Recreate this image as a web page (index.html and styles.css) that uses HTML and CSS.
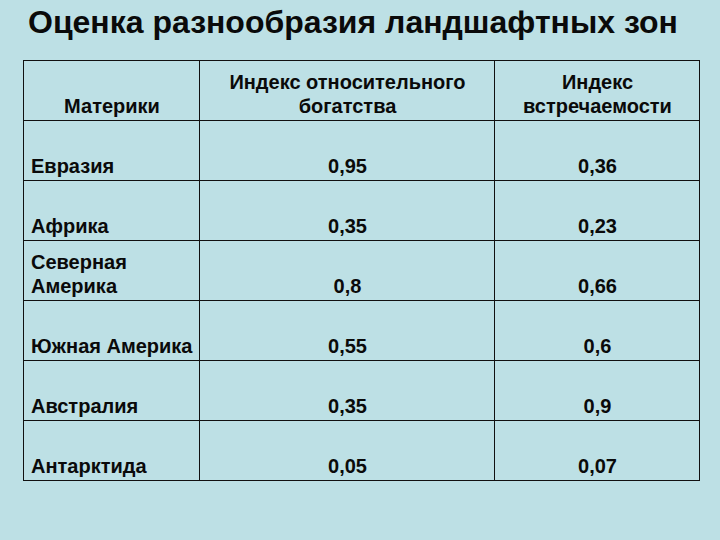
FILE: index.html
```html
<!DOCTYPE html>
<html lang="ru">
<head>
<meta charset="utf-8">
<link rel="stylesheet" href="styles.css">
</head>
<body>
<div class="slide">
  <h1 class="title">Оценка разнообразия ландшафтных зон</h1>
  <table class="grid">
    <colgroup>
      <col class="c1"><col class="c2"><col class="c3">
    </colgroup>
    <thead>
      <tr>
        <th class="name">Материки</th>
        <th>Индекс относительного<br>богатства</th>
        <th>Индекс<br>встречаемости</th>
      </tr>
    </thead>
    <tbody>
      <tr><td class="name">Евразия</td><td>0,95</td><td>0,36</td></tr>
      <tr><td class="name">Африка</td><td>0,35</td><td>0,23</td></tr>
      <tr><td class="name">Северная<br>Америка</td><td>0,8</td><td>0,66</td></tr>
      <tr><td class="name">Южная Америка</td><td>0,55</td><td>0,6</td></tr>
      <tr><td class="name">Австралия</td><td>0,35</td><td>0,9</td></tr>
      <tr><td class="name">Антарктида</td><td>0,05</td><td>0,07</td></tr>
    </tbody>
  </table>
</div>
</body>
</html>
```

FILE: styles.css
```css
html, body {
  margin: 0;
  padding: 0;
  background: #bde0e5;
}
.slide {
  width: 720px;
  height: 540px;
  padding: 3px 0 0 23px;
  box-sizing: border-box;
  font-family: "Liberation Sans", Arial, sans-serif;
  color: #0a0a0a;
}
.title {
  margin: 0 0 0 5px;
  font-size: 32px;
  font-weight: bold;
  line-height: 38px;
  height: 57px;
}
.grid {
  border-collapse: collapse;
  width: 676px;
  table-layout: fixed;
}
.c1 { width: 176px; }
.c2 { width: 295px; }
.c3 { width: 205px; }
.grid th, .grid td {
  border: 1.5px solid #111;
  height: 60px;
  padding: 0 6px 2px 7px;
  box-sizing: border-box;
  vertical-align: bottom;
  text-align: center;
  font-size: 20px;
  font-weight: bold;
  line-height: 24px;
}
.grid td.name {
  text-align: left;
}
```
